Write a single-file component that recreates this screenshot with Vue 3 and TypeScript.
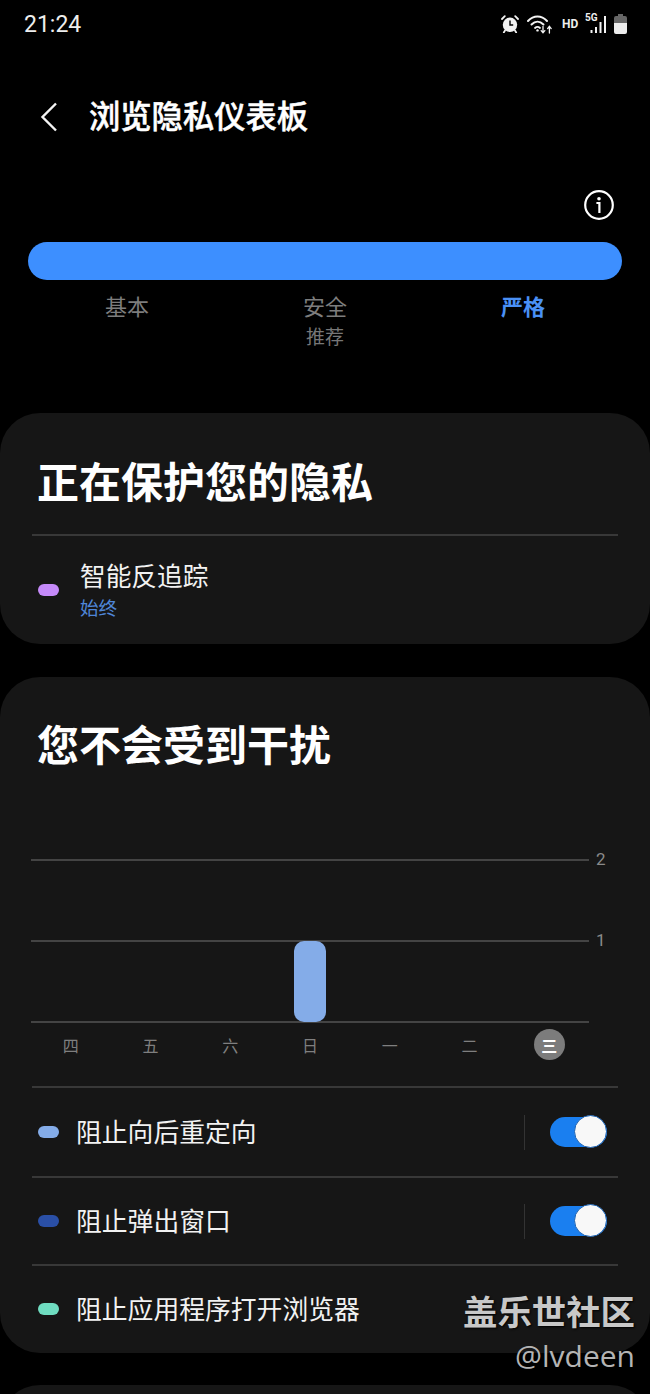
<template>
  <div class="screen">
    <div class="status">
      <span class="time">21:24</span>
      <div class="status-icons">
        <svg class="ic-alarm" width="18" height="18" viewBox="0 0 18 18">
          <circle cx="9" cy="9.8" r="7.2" fill="#f2f2f2" />
          <path d="M9 5.4v4.6h3.2" fill="none" stroke="#000" stroke-width="1.4" />
          <path d="M1 4 3.8 1.2M17 4l-2.8-2.8M4 15.6 2.8 17.4M14 15.6l1.2 1.8" stroke="#f2f2f2" stroke-width="1.8" stroke-linecap="round" />
        </svg>
        <svg class="ic-wifi" width="26" height="21" viewBox="0 0 26 21" fill="none" stroke="#f2f2f2" stroke-linecap="round">
          <path d="M1 7C6.6 1 14.4 1 20 7" stroke-width="2" />
          <path d="M4.5 10.5c3.8-3.8 8.2-3.8 12 0" stroke-width="2" />
          <path d="M8 14c1.8-1.6 3.2-1.6 5 0" stroke-width="1.8" />
          <circle cx="10.5" cy="16.4" r="1.2" fill="#f2f2f2" stroke="none" />
          <path d="M16 12.5v6M14.2 16.6l1.8 2.2 1.8-2.2" stroke-width="1.3" />
          <path d="M22.4 19v-6.5M20.6 14.6l1.8-2.2 1.8 2.2" stroke-width="1.3" />
        </svg>
        <span class="hd">HD</span>
        <div class="signal">
          <span class="five-g">5G</span>
          <svg width="17" height="17" viewBox="0 0 17 17" fill="#f2f2f2">
            <rect x="0.5" y="14" width="2" height="3" />
            <rect x="5" y="11" width="2" height="6" />
            <rect x="9.5" y="6" width="2" height="11" />
            <rect x="14" y="0" width="2" height="17" />
          </svg>
        </div>
        <svg class="ic-battery" width="13" height="20" viewBox="0 0 13 20">
          <path d="M4 0h5v2h2a2 2 0 0 1 2 2v5H0V4a2 2 0 0 1 2-2h2z" fill="#666" />
          <path d="M0 9h13v9a2 2 0 0 1-2 2H2a2 2 0 0 1-2-2z" fill="#ececec" />
        </svg>
      </div>
    </div>

    <div class="header">
      <svg width="18" height="30" viewBox="0 0 18 30" fill="none">
        <path d="M16 1.5 2.5 15 16 28.5" stroke="#f4f4f4" stroke-width="2.4" />
      </svg>
      <h1>浏览隐私仪表板</h1>
    </div>

    <div class="info-row">
      <svg width="30" height="30" viewBox="0 0 30 30" fill="none">
        <circle cx="15" cy="15" r="13.8" stroke="#fff" stroke-width="2.2" />
        <circle cx="15" cy="8.8" r="1.8" fill="#fff" />
        <path d="M12.4 13h3v10" stroke="#fff" stroke-width="2.2" />
      </svg>
    </div>

    <div class="level-bar"></div>
    <div class="levels">
      <div class="level">基本</div>
      <div class="level">安全<small>推荐</small></div>
      <div class="level active">严格</div>
    </div>

    <section class="card first">
      <h2>正在保护您的隐私</h2>
      <div class="line"></div>
      <div class="tracker">
        <span class="dot" style="background: #c58af9"></span>
        <div>
          <div class="tracker-name">智能反追踪</div>
          <div class="tracker-sub">始终</div>
        </div>
      </div>
    </section>

    <section class="card second">
      <h2>您不会受到干扰</h2>
      <div class="chart">
        <div class="plot">
          <div v-for="n in ['2', '1', '']" :key="n" class="grid-row">
            <i></i><span>{{ n }}</span>
          </div>
          <div class="bars">
            <div v-for="d in days" :key="d.label" class="bar-col">
              <div v-if="d.count" class="bar" :style="{ height: d.count * 81 + 'px' }"></div>
            </div>
          </div>
        </div>
        <div class="days">
          <div v-for="d in days" :key="d.label" :class="['day', { today: d.today }]">
            <span>{{ d.label }}</span>
          </div>
        </div>
      </div>

      <div class="rows">
        <template v-for="(r, i) in rows" :key="r.label">
          <div class="line"></div>
          <div :class="['row', 'row-' + i]">
            <span class="dot" :style="{ background: r.color }"></span>
            <span class="row-label">{{ r.label }}</span>
            <div v-if="r.toggle" class="row-end">
              <i class="vline"></i>
              <div class="toggle"><b></b></div>
            </div>
          </div>
        </template>
      </div>
    </section>

    <section class="card third"></section>

    <div class="watermark">
      <div class="wm-title">盖乐世社区</div>
      <div class="wm-user">@lvdeen</div>
    </div>
  </div>
</template>

<script setup lang="ts">
const days = [
  { label: '四', count: 0 },
  { label: '五', count: 0 },
  { label: '六', count: 0 },
  { label: '日', count: 1 },
  { label: '一', count: 0 },
  { label: '二', count: 0 },
  { label: '三', count: 0, today: true }
]

const rows = [
  { label: '阻止向后重定向', color: '#84ace8', toggle: true },
  { label: '阻止弹出窗口', color: '#2a4fa6', toggle: true },
  { label: '阻止应用程序打开浏览器', color: '#6fdcc0', toggle: false }
]
</script>

<style>
html,
body {
  background: #000;
}
</style>

<style scoped>
.screen {
  position: relative;
  width: 650px;
  height: 1394px;
  overflow: hidden;
  background: #000;
  color: #fff;
  font-family: 'Noto Sans CJK SC', 'Noto Sans', sans-serif;
}

.status {
  height: 48px;
  display: flex;
  align-items: center;
  justify-content: space-between;
  padding: 0 23px 0 24px;
}

.time {
  font-family: Roboto, sans-serif;
  font-size: 23px;
  color: #eee;
}

.status-icons {
  display: flex;
  align-items: center;
}

.ic-alarm {
  margin-right: 8px;
}

.ic-wifi {
  margin-right: 9px;
}

.hd {
  font-family: Roboto, sans-serif;
  font-size: 12px;
  font-weight: 700;
  color: #eee;
  width: 15px;
  margin-right: 8px;
}

.signal {
  position: relative;
  width: 22px;
  height: 17px;
  margin-right: 7px;
  display: flex;
  justify-content: flex-end;
}

.five-g {
  position: absolute;
  left: 0;
  top: -3px;
  font-family: Roboto, sans-serif;
  font-size: 10px;
  font-weight: 700;
  line-height: 10px;
  color: #eee;
}

.header {
  height: 48px;
  margin-top: 45px;
  padding-left: 40px;
  display: flex;
  align-items: center;
  gap: 31px;
}

h1 {
  margin: 0 0 4px;
  font-size: 31.3px;
  font-weight: 500;
  line-height: 44px;
  -webkit-text-stroke: 0.5px #fff;
}

.info-row {
  height: 32px;
  margin-top: 48px;
  padding-right: 36px;
  display: flex;
  align-items: center;
  justify-content: flex-end;
}

.level-bar {
  height: 38px;
  margin: 21px 28px 0;
  border-radius: 19px;
  background: #3d8fff;
}

.levels {
  height: 62px;
  margin: 10px 28px 0;
  display: grid;
  grid-template-columns: repeat(3, 1fr);
  text-align: center;
}

.level {
  font-size: 22px;
  line-height: 30px;
  color: #7d7d7d;
}

.level small {
  display: block;
  font-size: 19px;
  line-height: 31px;
  color: #777;
}

.level.active {
  color: #4a90f5;
  font-weight: 700;
}

.card {
  border-radius: 40px;
  background: #161616;
  padding: 0 32px;
}

.card h2 {
  margin: 0;
  padding-left: 5px;
  font-size: 42px;
  font-weight: 700;
  line-height: 44px;
}

.first {
  height: 231px;
  margin-top: 61px;
  padding-top: 45px;
  box-sizing: border-box;
}

.first .line {
  margin-top: 32px;
}

.line {
  height: 2px;
  background: #383838;
}

.tracker {
  height: 107px;
  padding-left: 6px;
  display: flex;
  align-items: center;
  gap: 21px;
}

.dot {
  flex: none;
  width: 21px;
  height: 12px;
  border-radius: 6px;
}

.tracker-name {
  font-size: 25.7px;
  line-height: 33px;
  color: #f2f2f2;
}

.tracker-sub {
  font-size: 18.6px;
  line-height: 31px;
  color: #4f86d8;
}

.second {
  height: 676px;
  margin-top: 33px;
  padding-top: 44px;
  box-sizing: border-box;
}

.chart {
  margin: 94px 0 0 -1px;
}

.plot {
  position: relative;
  height: 164px;
  display: flex;
  flex-direction: column;
}

.grid-row {
  height: 81px;
  flex: none;
  display: flex;
  align-items: flex-start;
}

.grid-row:last-of-type {
  height: 2px;
}

.grid-row i {
  width: 558px;
  height: 2px;
  background: #444;
}

.grid-row span {
  margin: -10px 0 0 7px;
  font-family: Roboto, sans-serif;
  font-size: 17px;
  line-height: 20px;
  color: #8a8a8a;
}

.bars {
  position: absolute;
  left: 0;
  bottom: 1px;
  width: 558px;
  display: grid;
  grid-template-columns: repeat(7, 1fr);
  align-items: end;
}

.bar-col {
  display: flex;
  justify-content: center;
}

.bar {
  width: 32px;
  border-radius: 10px;
  background: #84ace8;
}

.days {
  width: 558px;
  height: 31px;
  margin: 6px 0 0;
  display: grid;
  grid-template-columns: repeat(7, 1fr);
}

.day {
  display: flex;
  align-items: center;
  justify-content: center;
  font-size: 16px;
  color: #7f7f7f;
}

.day.today span {
  width: 31px;
  height: 31px;
  border-radius: 50%;
  background: #7c7c7c;
  color: #fff;
  font-weight: 700;
  display: flex;
  align-items: center;
  justify-content: center;
}

.rows {
  margin-top: 26px;
}

.row {
  height: 86px;
  padding-left: 6px;
  display: flex;
  align-items: center;
  gap: 17px;
}

.row-0 {
  height: 88px;
}

.row-label {
  font-size: 25.8px;
  color: #f2f2f2;
  line-height: 34px;
  margin-bottom: 2px;
}

.row-end {
  margin-left: auto;
  display: flex;
  align-items: center;
}

.vline {
  width: 1px;
  height: 35px;
  background: #333;
  margin-right: 25px;
}

.toggle {
  position: relative;
  width: 57px;
  height: 30px;
  margin-right: 11px;
  border-radius: 15px;
  background: #1a7ff0;
}

.toggle b {
  position: absolute;
  right: 0;
  top: -2px;
  width: 31px;
  height: 31px;
  border-radius: 50%;
  background: #f8f8f8;
  border: 1.5px solid #1a62b4;
}

.third {
  height: 120px;
  margin-top: 32px;
}

.watermark {
  position: absolute;
  right: 15px;
  top: 1288px;
  text-align: right;
}

.wm-title {
  font-size: 34.4px;
  font-weight: 700;
  line-height: 44px;
  color: #c8c8c8;
  text-shadow: 1px 1px 2px #000;
}

.wm-user {
  font-family: 'Open Sans', sans-serif;
  font-size: 30px;
  line-height: 47px;
  color: #b4b4b4;
}
</style>
